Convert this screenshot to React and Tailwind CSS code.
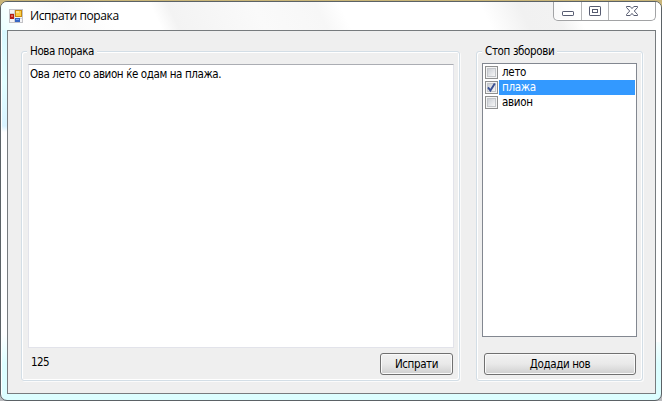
import React from "react";

const words = [
  { text: "лето", checked: false },
  { text: "плажа", checked: true },
  { text: "авион", checked: false },
];

function FormIcon() {
  return (
    <svg width="14" height="14" viewBox="0 0 14 14" shapeRendering="crispEdges">
      <rect x=".5" y=".5" width="13" height="13" fill="#f4f4f6" stroke="#c3c3c7" />
      <path d="M5 1v12M1 9.5h12M1 4h5" stroke="#cfd0d5" fill="none" />
      <rect x="1" y="5" width="4" height="5" fill="#b51f14" />
      <rect x="2" y="6" width="2" height="2" fill="#e0665a" />
      <rect x="6" y="1" width="7" height="7" fill="#c88a10" />
      <rect x="7" y="2" width="5" height="5" fill="#fbcf45" />
      <rect x="7" y="2" width="3" height="2" fill="#fde08a" />
      <rect x="6" y="9" width="5" height="4" fill="#3567c4" />
      <rect x="7" y="10" width="3" height="1" fill="#79a7f0" />
    </svg>
  );
}

function CaptionButtons() {
  return (
    <div className="flex h-[19px] w-[103px] rounded-b-[5px] border border-t-0 border-[#a2a3a5] bg-white/60 shadow-[inset_0_-1px_0_#fff]">
      <div className="flex w-[28px] items-end justify-center border-r border-[#b5b6b8] pb-[4px]">
        <svg width="12" height="5" viewBox="0 0 12 5">
          <rect x=".5" y=".5" width="11" height="4" rx=".6" fill="#fff" stroke="#565b70" />
        </svg>
      </div>
      <div className="flex w-[27px] items-end justify-center border-r border-[#b5b6b8] pb-[4px]">
        <svg width="12" height="10" viewBox="0 0 12 10">
          <rect x=".5" y=".5" width="11" height="9" rx=".6" fill="#fff" stroke="#565b70" />
          <rect x="3.5" y="3.5" width="5" height="3" fill="#fff" stroke="#565b70" />
        </svg>
      </div>
      <div className="flex flex-1 items-end justify-center pb-[4px]">
        <svg width="12" height="10" viewBox="0 0 12 10">
          <path
            d="M.5.5h3.7L6 2.6 7.8.5h3.7v1L8.3 5l3.2 3.5v1H7.8L6 7.4 4.2 9.5H.5v-1L3.7 5 .5 1.5z"
            fill="#fff"
            stroke="#565b70"
            strokeLinejoin="round"
          />
        </svg>
      </div>
    </div>
  );
}

function GroupBox({ title, className, titleClass, children }) {
  return (
    <section
      className={
        "flex flex-col rounded-[3px] border border-[#d3dee6] shadow-[inset_1px_1px_0_#fff,inset_-1px_-1px_0_#fff,1px_1px_0_#fbfbfb] " +
        className
      }
    >
      <h2 className={"-mt-[8px] ml-[5px] h-[14px] self-start bg-[#efefef] px-[3px] leading-[15px] whitespace-nowrap " + titleClass}>
        {title}
      </h2>
      {children}
    </section>
  );
}

function Button({ className, children }) {
  return (
    <button
      className={
        "h-[22px] rounded-[3px] border border-[#707070] bg-linear-to-b from-[#f2f2f2] via-[#e9e9e9] via-50% to-[#cfcfcf] text-center leading-[20px] whitespace-nowrap shadow-[inset_0_0_0_1px_#fafafa] " +
        className
      }
    >
      {children}
    </button>
  );
}

function CheckBox({ checked }) {
  return (
    <span className="flex size-[13px] items-center justify-center border border-[#8e8f8f] bg-[#f4f4f4] p-px">
      <span className="flex size-[9px] items-center justify-center border border-[#c3c6ca] bg-linear-to-br from-[#cbcfd5] to-[#f6f6f6]">
        {checked && (
          <svg width="9" height="9" viewBox="0 0 9 9" className="shrink-0 overflow-visible">
            <path d="M1 4.4 3.4 7.6 7.8.6" fill="none" stroke="#3a5094" strokeWidth="1.9" />
          </svg>
        )}
      </span>
    </span>
  );
}

export default function App() {
  return (
    <div className="h-[401px] w-[662px] overflow-hidden bg-linear-to-b from-[#c9b578] from-50% to-[#b9babd] to-50% font-['DejaVu_Sans_Condensed','DejaVu_Sans',sans-serif] text-[11.5px] text-black">
      <div className="flex h-full flex-col pt-px">
        <div className="flex flex-1 flex-col rounded-[7px] border border-[#5b6266] bg-[linear-gradient(90deg,transparent_7px,#fff_7px),linear-gradient(180deg,#fff_10px,#d9f8ff_30px,#e2ffff_80px,#d9f3ff_124px,#fff_130px,#fff_332px,#dcfeff_362px)] bg-[length:100%_340px,100%_100%] bg-no-repeat px-[6px] pb-[6px] shadow-[inset_1px_1px_0_#fff]">
          <header className="-mx-[6px] flex h-[28px] items-start justify-between rounded-t-[6px] bg-[linear-gradient(65deg,#e9ffff_0px,#fff_22px,#fafafa_65px,#fff_105px,#fff_146px,#f3f3f3_162px,#fafafa_240px,#f7f7f7_296px,#fff_318px,#fff_445px,#f1f1f1_480px,#f2f2f2_510px,#fff_530px)] pr-[5px] pl-[8px]">
            <div className="flex items-center gap-[7px] pt-[6px]">
              <FormIcon />
              <h1 className="font-['Open_Sans','Noto_Sans',sans-serif] text-[12px] leading-[16px] tracking-[-0.4px]">
                Испрати порака
              </h1>
            </div>
            <CaptionButtons />
          </header>
          <main className="flex w-[649px] flex-1 items-start gap-[16px] border border-[#777b7e] bg-[#efefef] pt-[20px] pl-[13px]">
            <GroupBox title="Нова порака" className="h-[330px] w-[439px]" titleClass="tracking-[-0.4px]">
              <textarea
                readOnly
                value="Ова лето со авион ќе одам на плажа."
                className="mt-[6px] ml-[6px] h-[284px] w-[426px] resize-none border border-[#e2e3ea] border-t-[#abadb3] bg-white px-px pt-[2px] leading-[14px] tracking-[-0.4px] outline-none"
              />
              <div className="flex justify-between pt-[5px] pr-[6px] pl-[9px]">
                <span className="pt-[2px] leading-[14px] tracking-[-0.6px]">125</span>
                <Button className="w-[73px] tracking-[-0.4px]">Испрати</Button>
              </div>
            </GroupBox>
            <GroupBox title="Стоп зборови" className="h-[330px] w-[167px]" titleClass="tracking-[-0.35px]">
              <ul className="mt-[5px] ml-[5px] h-[274px] w-[155px] border border-[#828790] bg-white p-px">
                {words.map((word) => (
                  <li key={word.text} className="flex h-[15px] items-center gap-px pl-px">
                    <CheckBox checked={word.checked} />
                    <span
                      className={
                        "h-[15px] flex-1 pl-[3px] leading-[15px] tracking-[-0.3px] " +
                        (word.checked ? "bg-[#3399ff] text-white" : "")
                      }
                    >
                      {word.text}
                    </span>
                  </li>
                ))}
              </ul>
              <Button className="mt-[16px] ml-[7px] w-[152px] tracking-[-0.4px]">Додади нов</Button>
            </GroupBox>
          </main>
        </div>
      </div>
    </div>
  );
}
